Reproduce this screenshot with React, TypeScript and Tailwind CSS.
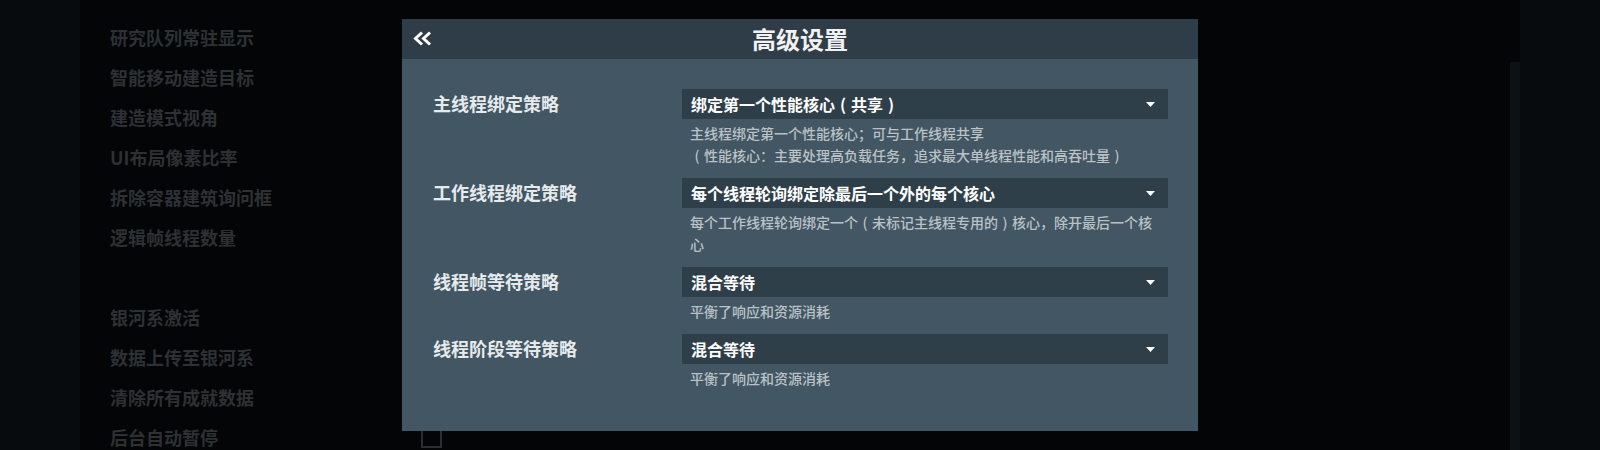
import type { ReactNode } from "react";

const bgItems = [
  "研究队列常驻显示",
  "智能移动建造目标",
  "建造模式视角",
  "UI布局像素比率",
  "拆除容器建筑询问框",
  "逻辑帧线程数量",
  "",
  "银河系激活",
  "数据上传至银河系",
  "清除所有成就数据",
  "后台自动暂停",
];

const rows = [
  {
    label: "主线程绑定策略",
    value: "绑定第一个性能核心（共享）",
    desc: ["主线程绑定第一个性能核心；可与工作线程共享", "（性能核心：主要处理高负载任务，追求最大单线程性能和高吞吐量）"],
  },
  {
    label: "工作线程绑定策略",
    value: "每个线程轮询绑定除最后一个外的每个核心",
    desc: ["每个工作线程轮询绑定一个（未标记主线程专用的）核心，除开最后一个核心"],
  },
  { label: "线程帧等待策略", value: "混合等待", desc: ["平衡了响应和资源消耗"] },
  { label: "线程阶段等待策略", value: "混合等待", desc: ["平衡了响应和资源消耗"] },
];

// the game font centres full-width brackets in their cell
function Txt({ s }: { s: string }) {
  const out: ReactNode[] = [];
  let buf = "";
  [...s].forEach((ch, i) => {
    if (ch === "（" || ch === "）") {
      if (buf) out.push(buf);
      buf = "";
      out.push(
        <span key={i} className="inline-block w-[1em] text-center">
          {ch === "（" ? "(" : ")"}
        </span>
      );
    } else buf += ch;
  });
  if (buf) out.push(buf);
  return <>{out}</>;
}

function Caret() {
  return (
    <svg width="9" height="5" viewBox="0 0 9 5" className="shrink-0">
      <path d="M0 0 H9 L4.5 5 Z" fill="#ffffff" />
    </svg>
  );
}

function BackIcon() {
  return (
    <svg width="19" height="15" viewBox="0 0 19 15">
      <path d="M9 1.5 L2.5 7.5 L9 13.5 M17 1.5 L10.5 7.5 L17 13.5" fill="none" stroke="#ffffff" strokeWidth="3" />
    </svg>
  );
}

export default function App() {
  return (
    <div
      className="relative w-[1600px] h-[450px] overflow-hidden bg-[#030507]"
      style={{ fontFamily: '"Noto Sans CJK SC", "Noto Sans", sans-serif' }}
    >
      {/* page behind the dialog */}
      <div className="flex h-full">
        <div className="w-[80px] h-full bg-[#070b0e]" />
        <div className="flex-1 pt-[17px] pl-[30px]">
          {bgItems.map((t, i) => (
            <div key={i} className="flex items-center h-[40px] text-[18px] font-bold text-[#2d3134]">
              <span className="w-[311px]">{t}</span>
              {t === "后台自动暂停" && <span className="w-[21px] h-[21px] border-2 border-[#2a2e31]" />}
            </div>
          ))}
        </div>
        <div className="w-[10px] mt-[62px] bg-[#0c1114]" />
        <div className="w-[80px] h-full bg-[#070b0e]" />
      </div>

      {/* dialog */}
      <div className="absolute left-[402px] top-[19px] w-[796px] h-[412px] bg-[#425664] flex flex-col">
        <div className="relative h-[40px] bg-[#2e3d47] flex items-center justify-center shrink-0">
          <button className="absolute left-[11px] top-[12px] flex">
            <BackIcon />
          </button>
          <span className="text-[24px] font-bold text-[#f2f2f2]">高级设置</span>
        </div>
        <div className="pt-[30px] pl-[31px] pr-[30px]">
          {rows.map((r) => (
            <div key={r.label} className="flex mb-[12px]">
              <div className="w-[249px] shrink-0 text-[18px] leading-[28px] font-bold text-[#e6eaec]">{r.label}</div>
              <div className="flex-1">
                <div className="h-[30px] bg-[#2f3f49] pl-[9px] pr-[13px] flex items-center justify-between">
                  <span className="text-[16px] font-bold text-white">
                    <Txt s={r.value} />
                  </span>
                  <Caret />
                </div>
                <div className="mt-[3px] px-[8px] text-[14px] leading-[22px] font-medium text-[#bac2c7]">
                  {r.desc.map((d) => (
                    <div key={d}>
                      <Txt s={d} />
                    </div>
                  ))}
                </div>
              </div>
            </div>
          ))}
        </div>
      </div>
    </div>
  );
}
